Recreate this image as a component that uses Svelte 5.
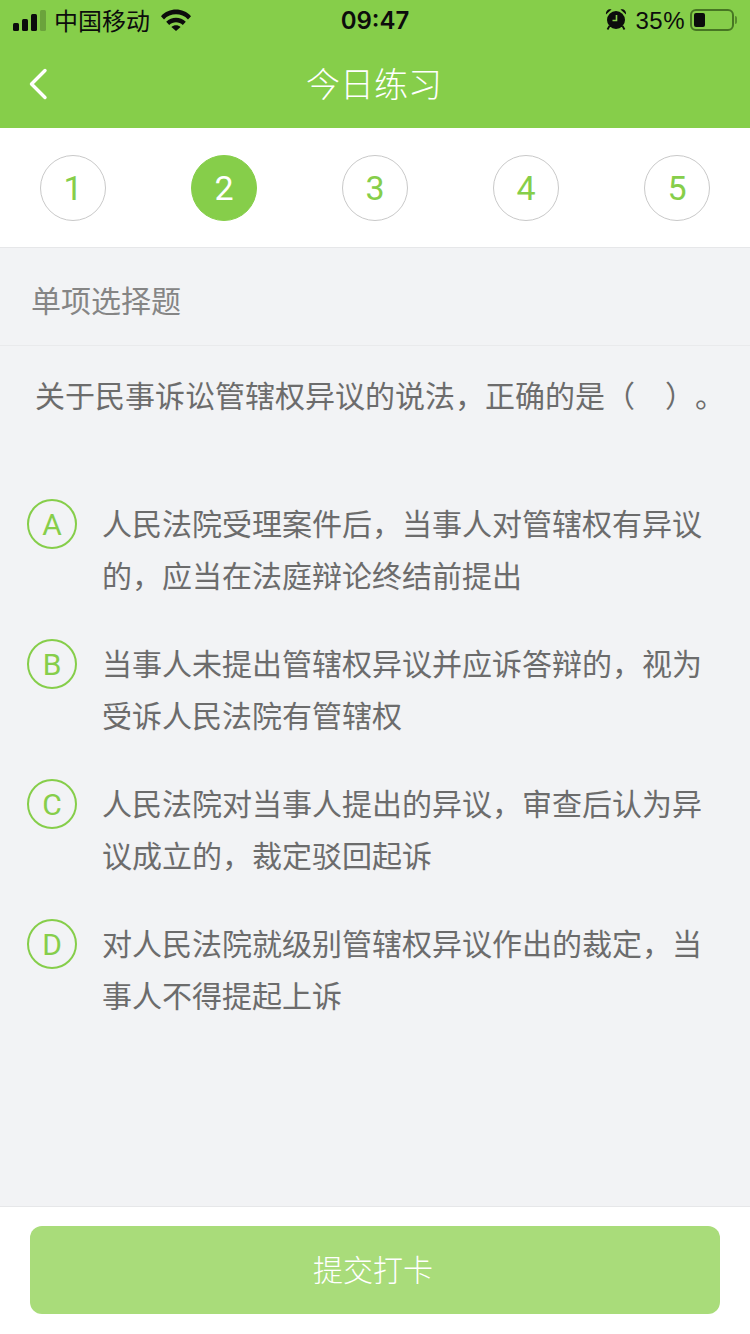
<script>
  const steps = [1, 2, 3, 4, 5]
  const current = 2
  const options = [
    { key: 'A', text: '人民法院受理案件后，当事人对管辖权有异议的，应当在法庭辩论终结前提出' },
    { key: 'B', text: '当事人未提出管辖权异议并应诉答辩的，视为受诉人民法院有管辖权' },
    { key: 'C', text: '人民法院对当事人提出的异议，审查后认为异议成立的，裁定驳回起诉' },
    { key: 'D', text: '对人民法院就级别管辖权异议作出的裁定，当事人不得提起上诉' }
  ]
</script>

<div class="page">
  <header class="top">
    <div class="status">
      <div class="status-left">
        <svg class="signal" width="34" height="22" viewBox="0 0 34 22" aria-hidden="true">
          <rect x="0" y="14" width="6" height="8" rx="1.5" fill="#0c0c0c" />
          <rect x="9" y="10" width="6" height="12" rx="1.5" fill="#0c0c0c" />
          <rect x="18" y="5" width="6" height="17" rx="1.5" fill="#0c0c0c" />
          <rect x="27" y="1" width="6" height="21" rx="1.5" fill="#0c0c0c" opacity="0.22" />
        </svg>
        <span class="carrier">中国移动</span>
        <svg class="wifi" width="30" height="22" viewBox="0 0 30 22" aria-hidden="true">
          <path d="M0 7.2C8-1.6 22-1.6 30 7.2L27 10.4C20.600 3.600 9.400 3.600 3 10.400z" fill="#0c0c0c" />
          <path d="M5.200 12.800C10.600 7.400 19.400 7.400 24.800 12.800L21.800 15.900C18 12.200 12 12.200 8.200 15.900z" fill="#0c0c0c" />
          <path d="M10.400 18C13 15.600 17 15.600 19.600 18L15 22z" fill="#0c0c0c" />
        </svg>
      </div>
      <span class="time">09:47</span>
      <div class="status-right">
        <svg class="alarm" width="22" height="22" viewBox="0 0 22 22" aria-hidden="true">
          <circle cx="11" cy="12" r="9" fill="#0c0c0c" />
          <path d="M1 6.500C.6 3 3 .8 6.500 1.400zM21 6.500C21.400 3 19 .8 15.500 1.400z" fill="#0c0c0c" />
          <path d="M4.500 18l-2 3.500M17.500 18l2 3.500" stroke="#0c0c0c" stroke-width="1.800" />
          <path d="M11.500 7v5.500H7.500" fill="none" stroke="#86ce4a" stroke-width="1.600" />
        </svg>
        <span class="pct">35%</span>
        <div class="battery"><div class="level"></div></div>
        <div class="nub"></div>
      </div>
    </div>
    <div class="nav">
      <svg class="back" width="22" height="34" viewBox="0 0 22 34" aria-hidden="true">
        <path d="M18 3.500L4.500 17 18 30.500" fill="none" stroke="#fff" stroke-width="3.400" stroke-linecap="round" stroke-linejoin="round" />
      </svg>
      <h1>今日练习</h1>
    </div>
  </header>

  <nav class="steps">
    {#each steps as n}
      <div class="step" class:active={n === current}>{n}</div>
    {/each}
  </nav>

  <main class="body">
    <div class="type">单项选择题</div>
    <p class="question">关于民事诉讼管辖权异议的说法，正确的是（　）。</p>
    <div class="options">
      {#each options as o}
        <div class="option">
          <span class="letter">{o.key}</span>
          <p>{o.text}</p>
        </div>
      {/each}
    </div>
  </main>

  <footer class="foot">
    <button type="button">提交打卡</button>
  </footer>
</div>

<style>
  :global(body) {
    margin: 0;
    background: #f2f3f5;
  }

  .page {
    display: flex;
    flex-direction: column;
    min-height: 100vh;
    font-family: "Noto Sans CJK SC", "Noto Sans", sans-serif;
    text-spacing-trim: space-all;
  }

  .top {
    height: 128px;
    background: #86ce4a;
  }

  .status {
    display: flex;
    align-items: center;
    justify-content: space-between;
    position: relative;
    height: 40px;
    padding: 0 13px;
    color: #0c0c0c;
  }

  .status-left,
  .status-right {
    display: flex;
    align-items: center;
  }

  .carrier {
    margin-left: 7px;
    font-size: 24px;
    line-height: 30px;
  }

  .wifi {
    margin-left: 11px;
  }

  .time {
    position: absolute;
    left: 0;
    right: 0;
    text-align: center;
    font-family: "Inter", "Liberation Sans", sans-serif;
    font-size: 24px;
    font-weight: 600;
  }

  .alarm {
    margin-bottom: 2px;
  }

  .pct {
    margin-left: 8px;
    font-family: "Liberation Sans", sans-serif;
    font-size: 24px;
    line-height: 32px;
    padding-top: 2px;
    letter-spacing: 0.5px;
  }

  .battery {
    box-sizing: border-box;
    width: 44px;
    height: 22px;
    margin-left: 5px;
    padding: 2px 27px 2px 2px;
    border: 2px solid rgba(30, 60, 10, 0.6);
    border-radius: 6px;
  }

  .level {
    height: 100%;
    background: #0c0c0c;
    border-radius: 2px;
  }

  .nub {
    width: 2px;
    height: 8px;
    margin-left: 1px;
    background: rgba(30, 60, 10, 0.45);
    border-radius: 0 2px 2px 0;
  }

  .nav {
    position: relative;
    height: 88px;
  }

  .back {
    position: absolute;
    left: 27px;
    top: 27px;
  }

  h1 {
    margin: 0;
    padding-right: 2px;
    text-align: center;
    color: #fff;
    font-size: 34px;
    font-weight: 300;
    line-height: 86px;
  }

  .steps {
    display: flex;
    justify-content: space-between;
    box-sizing: border-box;
    height: 120px;
    padding: 27px 40px 0;
    background: #fff;
    border-bottom: 1px solid #e6e7e9;
  }

  .step {
    box-sizing: border-box;
    width: 66px;
    height: 66px;
    border: 1px solid #c9c9c9;
    border-radius: 50%;
    color: #86ce4a;
    font-family: Roboto, "Liberation Sans", sans-serif;
    font-size: 34px;
    line-height: 64px;
    text-align: center;
  }

  .step.active {
    border-color: #86ce4a;
    background: #86ce4a;
    color: #fff;
  }

  .body {
    flex: 1;
  }

  .type {
    box-sizing: border-box;
    height: 98px;
    padding-left: 31px;
    border-bottom: 1px solid #e9eaec;
    color: #858585;
    font-size: 30px;
    line-height: 103px;
  }

  .question {
    margin: 0;
    padding: 23px 0 0 35px;
    color: #6c6c6c;
    font-size: 30px;
    line-height: 50px;
    white-space: nowrap;
  }

  .options {
    display: grid;
    gap: 36px;
    padding: 77px 40px 0 27px;
  }

  .option {
    display: flex;
    gap: 25px;
  }

  .letter {
    flex: none;
    box-sizing: border-box;
    width: 50px;
    height: 50px;
    margin-top: 3px;
    border: 2px solid #86ce4a;
    border-radius: 50%;
    color: #86ce4a;
    font-family: Roboto, "Liberation Sans", sans-serif;
    font-size: 30px;
    line-height: 47px;
    text-align: center;
  }

  .option p {
    margin: 0;
    color: #6c6c6c;
    font-size: 30px;
    line-height: 52px;
  }

  .foot {
    box-sizing: border-box;
    height: 128px;
    padding: 19px 30px 0;
    background: #fff;
    border-top: 1px solid #e6e7e9;
  }

  button {
    display: block;
    width: 100%;
    height: 88px;
    padding: 0 4px 4px 0;
    border: 0;
    border-radius: 12px;
    background: #a9dc7a;
    color: #fff;
    font-family: inherit;
    font-size: 30px;
    font-weight: 300;
  }
</style>
